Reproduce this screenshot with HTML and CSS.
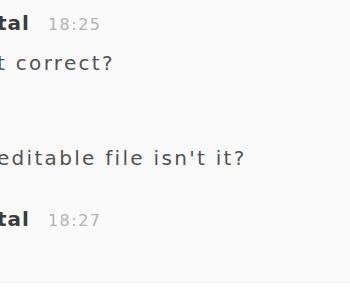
FILE: index.html
```html
<!DOCTYPE html>
<html>
<head>
<meta charset="utf-8">
<link rel="stylesheet" href="styles.css">
</head>
<body>
<div class="chat">
  <div class="msg">
    <div class="head"><span class="name">tal</span><span class="time">18:25</span></div>
    <p class="text">t correct?</p>
    <p class="text later">editable file isn't it?</p>
  </div>
  <div class="msg next">
    <div class="head"><span class="name">tal</span><span class="time">18:27</span></div>
  </div>
</div>
<div class="composer"></div>
</body>
</html>
```

FILE: styles.css
```css
html, body {
  margin: 0;
  padding: 0;
  background: #ffffff;
  overflow: hidden;
}
.chat {
  height: 283px;
  background: #fafafa;
  border-bottom: 1px solid #f2f2f2;
  padding-top: 11px;
  box-sizing: border-box;
  overflow: hidden;
}
.msg {
  margin-left: -3px;
  font-family: "DejaVu Sans", sans-serif;
}
.head {
  display: flex;
  align-items: baseline;
  gap: 18px;
  height: 24px;
  line-height: 24px;
}
.name {
  font-weight: bold;
  font-size: 20px;
  color: #3c3c3c;
  letter-spacing: 1px;
}
.time {
  font-size: 16px;
  color: #b4b4b4;
  letter-spacing: 1.5px;
}
.text {
  margin: 16px 0 0 0;
  font-size: 20px;
  line-height: 24px;
  letter-spacing: 2.3px;
  color: #525252;
}
.text.later {
  margin-top: 71px;
}
.msg.next {
  margin-top: 37px;
}
.composer {
  height: 17px;
  background: #ffffff;
}
```
